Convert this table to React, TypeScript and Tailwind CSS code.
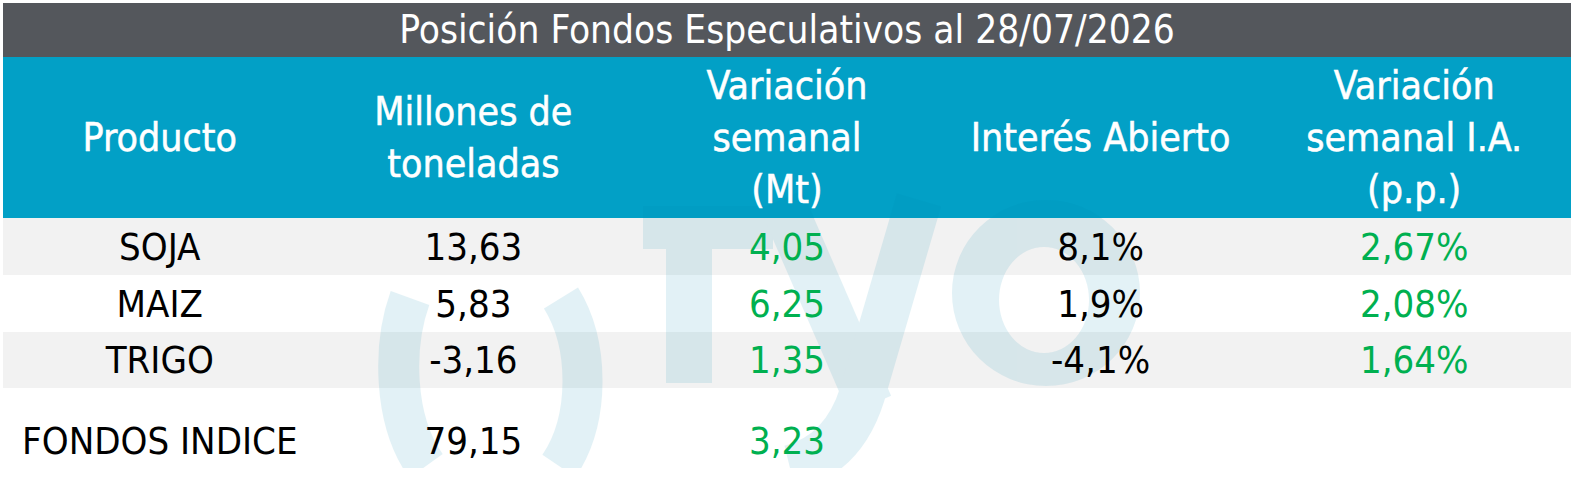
import React from "react";

const rows = [
  { p: "SOJA", m: "13,63", v: "4,05", ia: "8,1%", via: "2,67%", bg: "bg-[#f2f2f2]", h: "h-[57px]" },
  { p: "MAIZ", m: "5,83", v: "6,25", ia: "1,9%", via: "2,08%", bg: "bg-white", h: "h-[57px]" },
  { p: "TRIGO", m: "-3,16", v: "1,35", ia: "-4,1%", via: "1,64%", bg: "bg-[#f2f2f2]", h: "h-[56px]" },
];

function Watermark() {
  const c = "#0089b0";
  return (
    <svg
      className="absolute left-0 top-0 pointer-events-none"
      width="1575"
      height="501"
      viewBox="0 0 1575 501"
    >
      <defs>
        <clipPath id="wmclip">
          <rect x="0" y="57" width="1575" height="411" />
        </clipPath>
      </defs>
      <g clipPath="url(#wmclip)" opacity="0.11">
        <path d="M 410 298 C 393 345, 393 420, 426 466" stroke={c} strokeWidth="41" fill="none" />
        <path d="M 561 298 C 590 345, 590 420, 559 466" stroke={c} strokeWidth="40" fill="none" />
        <rect x="643" y="206" width="130" height="43" fill={c} />
        <rect x="666" y="206" width="46" height="177" fill={c} />
        <path d="M 781 200 L 870 405" stroke={c} strokeWidth="46" fill="none" />
        <path d="M 919 200 L 862 395 Q 843 455 790 468" stroke={c} strokeWidth="46" fill="none" />
        <path
          fillRule="evenodd"
          fill={c}
          d="M 952 293 A 94 93 0 1 0 1140 293 A 94 93 0 1 0 952 293 Z M 999 300 A 45 53 0 1 0 1089 300 A 45 53 0 1 0 999 300 Z"
        />
      </g>
    </svg>
  );
}

export default function App() {
  return (
    <div
      className="relative w-[1575px] h-[501px] bg-white overflow-hidden"
      style={{ fontFamily: '"DejaVu Sans Condensed", "Liberation Sans", sans-serif' }}
    >
      <div className="pl-[3px] pt-[3px] w-[1571px]">
        <div className="h-[54px] bg-[#54575c] flex items-center justify-center text-white text-[38.5px] leading-none">
          <span className="relative z-10">Posición Fondos Especulativos al 28/07/2026</span>
        </div>
        <div className="grid grid-cols-5 h-[161px] bg-[#02a0c6] items-center text-center text-white text-[39px] leading-[52px] [-webkit-text-stroke:0.5px_white]">
          <div className="relative z-10">Producto</div>
          <div className="relative z-10">
            Millones de
            <br />
            toneladas
          </div>
          <div className="relative z-10">
            Variación
            <br />
            semanal
            <br />
            (Mt)
          </div>
          <div className="relative z-10">Interés Abierto</div>
          <div className="relative z-10">
            Variación
            <br />
            semanal I.A.
            <br />
            (p.p.)
          </div>
        </div>
        {rows.map((r) => (
          <div key={r.p} className={`grid grid-cols-5 ${r.h} ${r.bg} items-center text-center text-[38px] leading-none`}>
            <div className="relative z-10 text-black">{r.p}</div>
            <div className="relative z-10 text-black">{r.m}</div>
            <div className="relative z-10 text-[#00b050]">{r.v}</div>
            <div className="relative z-10 text-black">{r.ia}</div>
            <div className="relative z-10 text-[#00b050]">{r.via}</div>
          </div>
        ))}
        <div className="grid grid-cols-5 h-[106px] bg-white items-center text-center text-[38px] leading-none">
          <div className="relative z-10 text-black whitespace-nowrap">FONDOS INDICE</div>
          <div className="relative z-10 text-black">79,15</div>
          <div className="relative z-10 text-[#00b050]">3,23</div>
          <div />
          <div />
        </div>
      </div>
      <Watermark />
    </div>
  );
}
